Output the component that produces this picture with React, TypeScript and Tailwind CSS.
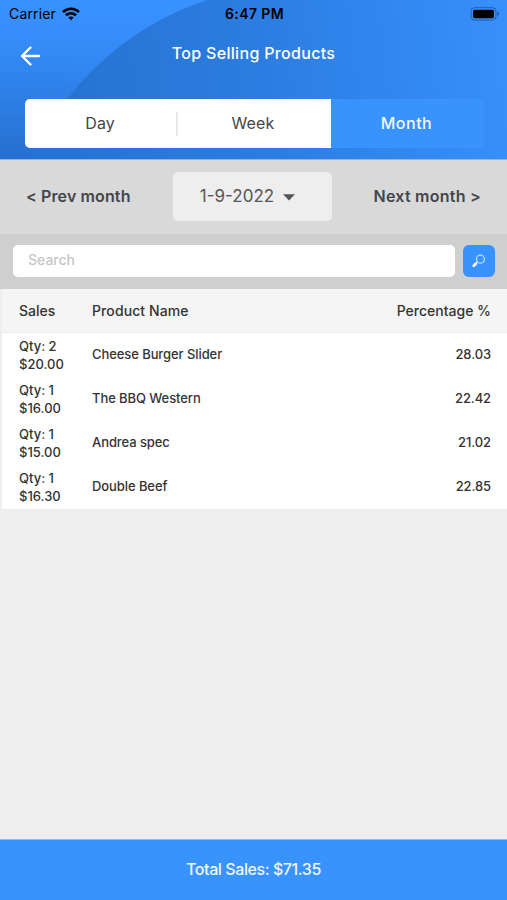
import React from 'react';

const rows = [
  { qty: 2, total: '$20.00', name: 'Cheese Burger Slider', pct: '28.03' },
  { qty: 1, total: '$16.00', name: 'The BBQ Western', pct: '22.42' },
  { qty: 1, total: '$15.00', name: 'Andrea spec', pct: '21.02' },
  { qty: 1, total: '$16.30', name: 'Double Beef', pct: '22.85' },
];

function HeaderBackdrop() {
  return (
    <svg className="absolute inset-0 h-full w-full" viewBox="0 0 507 160" preserveAspectRatio="none" aria-hidden="true">
      <defs>
        <linearGradient id="base" x1="0.2" y1="0" x2="0.16" y2="1">
          <stop offset="0" stopColor="#3892ff" />
          <stop offset="0.25" stopColor="#358dfa" />
          <stop offset="1" stopColor="#2570d0" />
        </linearGradient>
        <linearGradient id="disc" gradientUnits="userSpaceOnUse" x1="70" y1="110" x2="500" y2="60">
          <stop offset="0" stopColor="#2673d3" />
          <stop offset="0.45" stopColor="#2c7de1" />
          <stop offset="1" stopColor="#378ffb" />
        </linearGradient>
      </defs>
      <rect width="507" height="160" fill="url(#base)" />
      <path d="M207 0A290 290 0 0 0 32 160H507V0Z" fill="url(#disc)" />
    </svg>
  );
}

function StatusBar() {
  return (
    <div className="flex h-[27px] items-center pl-[9px] pr-[7px] text-black">
      <div className="flex flex-1 items-center gap-[6px]">
        <span className="text-[14px] tracking-[0.15px]">Carrier</span>
        <svg width="18" height="14" viewBox="0 0 18 14" fill="none" stroke="#000" strokeWidth="2.6">
          <path d="M1 5.1C5.5.7 12.5.7 17 5.1" />
          <path d="M4 8.3c2.8-2.7 7.2-2.7 10 0" />
          <path d="M6.3 10.5c1.5-1.4 3.9-1.4 5.4 0L9 13.3Z" fill="#000" stroke="none" />
        </svg>
      </div>
      <span className="text-[14px] font-semibold tracking-[0.4px]">6:47 PM</span>
      <div className="flex flex-1 justify-end">
        <svg width="30" height="14" viewBox="0 0 30 14">
          <rect x="1" y=".7" width="25" height="12.4" rx="3.5" fill="none" stroke="#1d4f8e" strokeOpacity=".75" />
          <rect x="3" y="2.7" width="21" height="8.5" rx="1.8" fill="#000" />
          <path d="M27.5 4.8c2 .8 2 3.4 0 4.2Z" fill="#1d4f8e" />
        </svg>
      </div>
    </div>
  );
}

export default function App() {
  return (
    <div className="flex h-[900px] w-[507px] flex-col overflow-hidden bg-[#eeeeee] font-['Inter','Liberation_Sans',sans-serif] text-[#333]">
      <header className="relative h-[160px] shrink-0 border-b border-[#8fb4e4]">
        <HeaderBackdrop />
        <div className="relative">
          <StatusBar />
          <div className="grid h-[52px] grid-cols-[60px_1fr_60px] text-white">
            <button className="flex items-center pl-[20px] pt-[6px]" aria-label="Back">
              <svg width="21" height="20" viewBox="0 0 21 20" fill="none" stroke="#fff" strokeWidth="2.3" strokeLinecap="round" strokeLinejoin="round">
                <path d="M19 10H2M10.5 1.5 2 10l8.5 8.5" />
              </svg>
            </button>
            <h1 className="flex items-center justify-center whitespace-nowrap text-[16px] font-medium tracking-[0.32px]">Top Selling Products</h1>
          </div>
          <div className="mx-[25px] mt-[20px] grid h-[49px] w-[459px] grid-cols-3 text-[16px] text-[#454545]">
            <button className="flex items-center rounded-l-[5px] bg-white">
              <span className="flex-1 pb-px pr-px">Day</span>
              <span className="h-[24px] w-[2px] bg-[#e8e8e8]" />
            </button>
            <button className="bg-white pb-px pr-[3px] tracking-[0.2px]">Week</button>
            <button className="rounded-r-[5px] bg-[#3893ff] pb-px pr-[2px] font-medium tracking-[0.5px] text-[#f2f8ff]">Month</button>
          </div>
        </div>
      </header>

      <section className="flex h-[74px] shrink-0 items-center justify-between bg-[#d9d9d9] pb-[2px] pl-[26px] pr-[26px] text-[16px] font-semibold text-[#43464a]">
        <button className="w-[146px] whitespace-nowrap text-left tracking-[0.12px]">&lt; Prev month</button>
        <button className="flex h-[49px] w-[159px] items-center justify-center gap-[9px] rounded-[5px] bg-[#eeeeee] pr-[9px] pt-[2px] text-[17px] font-normal text-[#555]">
          <span>1-9-2022</span>
          <svg width="12" height="7" viewBox="0 0 12 7"><path d="M0 .3h12L6 6.5Z" fill="#555" /></svg>
        </button>
        <button className="w-[149px] whitespace-nowrap text-right tracking-[0.24px]">Next month &gt;</button>
      </section>

      <section className="flex h-[55px] shrink-0 items-center gap-[8px] bg-[#cfcfcf] pb-px pl-[13px] pr-[12px]">
        <input className="h-[32px] min-w-0 flex-1 rounded-[5px] bg-white px-[15px] pb-[3px] text-[14px] font-medium outline-none placeholder:text-[#c6c6c6]" placeholder="Search" />
        <button className="flex h-[32px] w-[32px] items-center justify-center rounded-[6px] bg-[#3893ff]" aria-label="Search">
          <svg width="14" height="14" viewBox="0 0 14 14" fill="none" strokeLinecap="round">
            <circle cx="8.4" cy="5.2" r="4" stroke="#b9dcff" strokeWidth="1.3" />
            <path d="m5.3 8.3-1.6 1.6" stroke="#d5eaff" strokeWidth="1.3" />
            <path d="m3.7 9.8-1.9 1.9" stroke="#fff" strokeWidth="2.7" />
          </svg>
        </button>
      </section>

      <main className="flex-1">
        <div className="ml-[2px] bg-white">
          <div className="grid h-[44px] grid-cols-[73px_1fr_110px] items-center border-b border-[#ebebeb] bg-[#f5f5f5] pl-[17px] pr-[16px] text-[14px] font-medium">
            <span>Sales</span>
            <span className="tracking-[0.1px]">Product Name</span>
            <span className="whitespace-nowrap text-right">Percentage %</span>
          </div>
          {rows.map((row) => (
            <div key={row.name} className="grid h-[44px] grid-cols-[73px_1fr_110px] items-center pl-[17px] pr-[16px] text-[13px] font-medium">
              <span className="pb-px leading-[18px]">
                Qty: {row.qty}
                <br />
                {row.total}
              </span>
              <span className="tracking-[-0.08px]">{row.name}</span>
              <span className="text-right tracking-[-0.1px]">{row.pct}</span>
            </div>
          ))}
        </div>
      </main>

      <footer className="flex h-[61px] shrink-0 items-center justify-center border-t border-[#8dbdf5] bg-[#3893ff] pb-[2px] text-[16px] font-medium tracking-[-0.42px] text-[#eef6ff]">Total Sales: $71.35</footer>
    </div>
  );
}
